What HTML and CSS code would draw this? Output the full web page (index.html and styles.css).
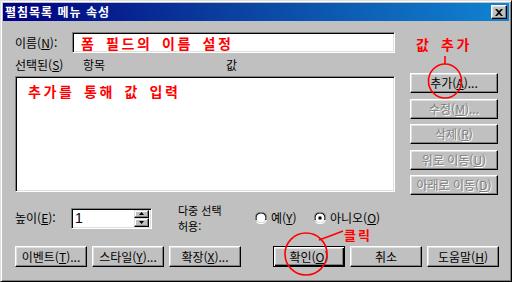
FILE: index.html
```html
<!DOCTYPE html>
<html lang="ko">
<head>
<meta charset="utf-8">
<link rel="stylesheet" href="styles.css">
</head>
<body>
<div class="dlg">
  <div class="title">
    <span class="title-text">펼침목록 메뉴 속성</span>
    <span class="close"><svg width="8" height="7" viewBox="0 0 8 7"><path d="M0 0h2l2 2 2-2h2L5 3.5 8 7H6L4 5 2 7H0l3-3.5z" fill="#000"/></svg></span>
  </div>
  <div class="main">
    <div class="left">
      <div class="name-row">
        <span class="lbl name-lbl">이름(<u>N</u>):</span>
        <div class="field name-field"><span class="red">폼 필드의 이름 설정</span></div>
      </div>
      <div class="list-head">
        <span class="h1">선택된(<u>S</u>)</span><span class="h2">항목</span><span class="h3">값</span>
      </div>
      <div class="field list"><span class="red">추가를 통해 값 입력</span></div>
    </div>
    <div class="right">
      <div class="note"><span class="red">값 추가</span></div>
      <div class="btn side">추가(<u>A</u>)...</div>
      <div class="btn side dis">수정(<u>M</u>)...</div>
      <div class="btn side dis">삭제(<u>R</u>)</div>
      <div class="btn side dis">위로 이동(<u>U</u>)</div>
      <div class="btn side dis">아래로 이동(<u>D</u>)</div>
    </div>
  </div>
  <div class="opts">
    <span class="lbl h-lbl">높이(<u>E</u>):</span>
    <div class="field spin">
      <span class="spin-val">1</span>
      <span class="spin-btns">
        <span class="spin-b"><svg width="5" height="3" viewBox="0 0 5 3"><path d="M2.5 0L5 3H0z" fill="#000"/></svg></span>
        <span class="spin-b"><svg width="5" height="3" viewBox="0 0 5 3"><path d="M0 0h5L2.5 3z" fill="#000"/></svg></span>
      </span>
    </div>
    <span class="multi">다중 선택<br>허용:</span>
    <span class="radio r1"><svg width="12" height="12" viewBox="0 0 12 12"><path d="M4 0h4l2 1 1 1 1 2v4h-1V4l-1-2-2-1H4L2 2 1 4v4H0V4l1-2 1-1z" fill="#808080"/><path d="M4 1h4l2 1 1 2v4h-1V4L9 3 8 2H4L3 3 2 4v4H1V4l1-2z" fill="#000"/><circle cx="6" cy="6" r="4.5" fill="#fff"/><path d="M11 8l-1 2-2 1H4l-2-1-1-2h1l1 1 1 1h4l1-1 1-1z" fill="#dfdfdf"/><path d="M12 8l-1 2-1 1-2 1H4l-2-1-1-1 1 0 2 1h4l2-1 1-2z" fill="#fff"/></svg><span class="rt">예(<u>Y</u>)</span></span>
    <span class="radio r2"><svg width="12" height="12" viewBox="0 0 12 12"><path d="M4 0h4l2 1 1 1 1 2v4h-1V4l-1-2-2-1H4L2 2 1 4v4H0V4l1-2 1-1z" fill="#808080"/><path d="M4 1h4l2 1 1 2v4h-1V4L9 3 8 2H4L3 3 2 4v4H1V4l1-2z" fill="#000"/><circle cx="6" cy="6" r="4.5" fill="#fff"/><path d="M11 8l-1 2-2 1H4l-2-1-1-2h1l1 1 1 1h4l1-1 1-1z" fill="#dfdfdf"/><path d="M12 8l-1 2-1 1-2 1H4l-2-1-1-1 1 0 2 1h4l2-1 1-2z" fill="#fff"/><rect x="4.5" y="4.5" width="3" height="3" rx="0.5" fill="#000"/></svg><span class="rt">아니오(<u>O</u>)</span></span>
  </div>
  <div class="bottom">
    <div class="grp">
      <div class="btn low">이벤트(<u>T</u>)...</div>
      <div class="btn low">스타일(<u>Y</u>)...</div>
      <div class="btn low">확장(<u>X</u>)...</div>
    </div>
    <div class="grp">
      <div class="btn low def">확인(<u>O</u>)</div>
      <div class="btn low">취소</div>
      <div class="btn low">도움말(<u>H</u>)</div>
    </div>
  </div>
  <svg class="marks" width="512" height="282" viewBox="0 0 512 282">
    <g fill="none" stroke="#ff0000" stroke-width="1.6">
      <ellipse cx="445" cy="81" rx="16.5" ry="17"/>
      <line x1="445" y1="56" x2="445" y2="64"/>
      <ellipse cx="306" cy="254" rx="21" ry="21"/>
      <polyline points="319,240 330,236 343,231"/>
    </g>
    <text x="344" y="240" class="klik">클릭</text>
  </svg>
</div>
</body>
</html>
```

FILE: styles.css
```css
html, body {
  margin: 0;
  padding: 0;
  background: #c0c0c0;
}
body {
  font-family: "Noto Sans CJK KR", "Noto Sans", sans-serif;
  font-size: 12px;
  color: #000;
}
.dlg {
  position: relative;
  width: 512px;
  height: 282px;
  box-sizing: border-box;
  background: #c0c0c0;
  border: 1px solid;
  border-color: #dfdfdf #000 #000 #dfdfdf;
  box-shadow: inset 1px 1px #fff, inset -1px -1px #808080;
  padding: 2px;
  overflow: hidden;
}
.title {
  height: 18px;
  background: linear-gradient(90deg, #000080 0%, #0a3a9c 40%, #1084d0 100%);
  display: flex;
  align-items: center;
  justify-content: space-between;
  padding: 0 2px 0 2px;
}
.title-text {
  color: #fff;
  font-weight: bold;
  font-size: 12px;
  letter-spacing: 1px;
  line-height: 18px;
}
.close {
  width: 16px;
  height: 14px;
  box-sizing: border-box;
  background: #c0c0c0;
  border: 1px solid;
  border-color: #fff #000 #000 #fff;
  box-shadow: inset -1px -1px #808080, inset 1px 1px #dfdfdf;
  display: flex;
  align-items: center;
  justify-content: center;
}
.main {
  display: flex;
  gap: 15px;
  margin-top: 11px;
  padding-left: 12px;
}
.left {
  width: 380px;
  display: flex;
  flex-direction: column;
}
.name-row {
  display: flex;
  align-items: center;
  height: 21px;
}
.lbl {
  line-height: 14px;
}
.name-lbl {
  width: 57px;
}
.field {
  box-sizing: border-box;
  background: #fff;
  border: 1px solid;
  border-color: #808080 #fff #fff #808080;
  box-shadow: inset 1px 1px #000, inset -1px -1px #dfdfdf;
}
.name-field {
  width: 323px;
  height: 21px;
  display: flex;
  align-items: center;
  padding-left: 8px;
}
.red {
  color: #ff0000;
  font-weight: bold;
  font-size: 14px;
  letter-spacing: 2.6px;
  word-spacing: 3px;
  line-height: 16px;
}
.list-head {
  height: 23px;
  display: flex;
  align-items: flex-start;
  padding-top: 5px;
  box-sizing: border-box;
  line-height: 14px;
}
.h1 { width: 68px; }
.h2 { width: 143px; }
.list {
  height: 116px;
  padding: 6px 0 0 12px;
}
.right {
  width: 88px;
  display: flex;
  flex-direction: column;
  gap: 5.5px;
}
.note {
  height: 35.5px;
  padding: 4px 0 0 6px;
  box-sizing: border-box;
}
.btn {
  box-sizing: border-box;
  background: #c0c0c0;
  border: 1px solid;
  border-color: #fff #000 #000 #fff;
  box-shadow: inset -1px -1px #808080, inset 1px 1px #dfdfdf;
  display: flex;
  align-items: center;
  justify-content: center;
  line-height: 14px;
  white-space: nowrap;
}
.side {
  height: 20px;
}
.dis {
  color: #808080;
  text-shadow: 1px 1px 0 #fff;
}
.opts {
  display: flex;
  align-items: center;
  margin-top: 7px;
  padding-left: 12px;
  height: 32px;
}
.h-lbl {
  width: 56px;
}
.spin {
  width: 81px;
  height: 21px;
  display: flex;
  align-items: center;
  justify-content: space-between;
  padding: 2px 2px 2px 3px;
}
.spin-val {
  font-family: "Liberation Sans", sans-serif;
  font-size: 14px;
  line-height: 16px;
}
.spin-btns {
  display: flex;
  flex-direction: column;
  height: 17px;
}
.spin-b {
  width: 15px;
  height: 8.5px;
  box-sizing: border-box;
  background: #c0c0c0;
  border: 1px solid;
  border-color: #dfdfdf #000 #000 #dfdfdf;
  box-shadow: inset -1px -1px #808080, inset 1px 1px #fff;
  display: flex;
  align-items: center;
  justify-content: center;
}
.multi {
  margin-left: 26px;
  width: 77px;
  font-size: 11px;
  line-height: 16px;
}
.radio {
  display: flex;
  align-items: center;
  gap: 4px;
}
.r1 {
  width: 59px;
}
.rt {
  line-height: 14px;
}
.bottom {
  display: flex;
  justify-content: space-between;
  margin-top: 12px;
  padding: 0 10px 0 12px;
}
.grp {
  display: flex;
  gap: 5px;
}
.low {
  width: 72px;
  height: 21px;
}
.def {
  border-color: #000;
  box-shadow: inset 1px 1px #fff, inset -1px -1px #000, inset -2px -2px #808080, inset 2px 2px #dfdfdf;
}
.marks {
  position: absolute;
  left: -1px;
  top: -1px;
  pointer-events: none;
}
.klik {
  fill: #ff0000;
  font-family: "Noto Sans CJK KR", sans-serif;
  font-weight: bold;
  font-size: 13px;
  letter-spacing: 2px;
}
```
